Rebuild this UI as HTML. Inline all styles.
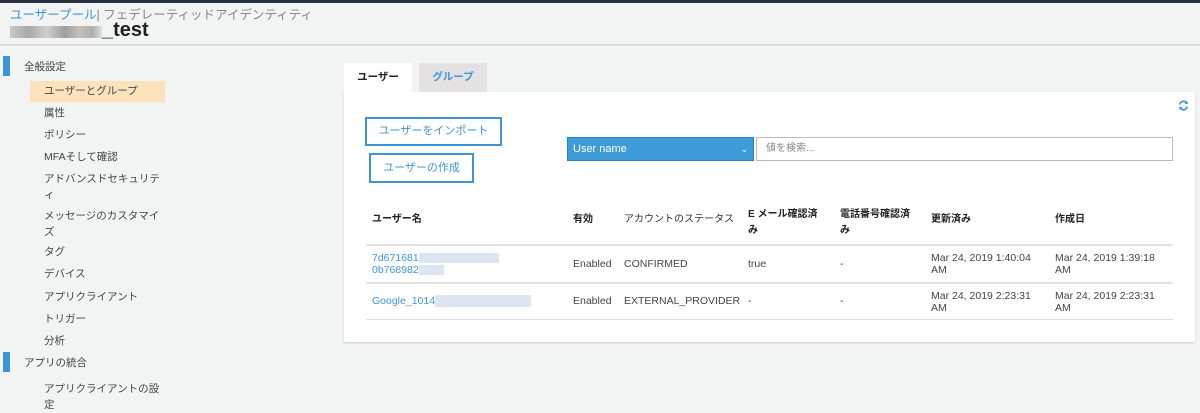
<!DOCTYPE html>
<html><head><meta charset="utf-8"><style>
*{margin:0;padding:0;box-sizing:border-box}
body{width:1200px;height:408px;overflow:hidden;background:#f2f3f3;font-family:"Liberation Sans","Noto Sans CJK JP",sans-serif;color:#333;position:relative;font-size:11px}
.a{position:absolute;white-space:nowrap}
.nav{position:absolute;left:44px;font-size:10.5px;color:#444;line-height:16px}
.th{position:absolute;font-size:10px;font-weight:bold;color:#222;line-height:16px}
.td{position:absolute;font-size:10.5px;color:#444;line-height:12px}
.line{position:absolute;left:366px;width:807px;height:1px;background:#ddd}
.btn{position:absolute;border:2px solid #3f95d3;background:#fff;color:#3f95d3;font-size:11px;text-align:center}
.blur{display:inline-block;vertical-align:middle;background:#dde6f0}
</style></head><body>
<div class="a" style="left:0;top:0;width:1200px;height:3px;background:#232f3e"></div>
<div class="a" style="left:10px;top:4px;font-size:12.5px;color:#888"><span style="color:#3f95d3">ユーザープール</span>| フェデレーティッドアイデンティティ</div>
<div class="a" style="left:10px;top:26px;width:92px;height:12px;background:linear-gradient(90deg,#c8c8c8,#a8a8a8 20%,#cfcfcf 40%,#9e9e9e 60%,#c4bfb8 75%,#b0b0b0 90%,#e0e0e0)"></div>
<div class="a" style="left:102px;top:19px;font-size:20px;font-weight:bold;color:#222">_test</div>
<div class="a" style="left:0;top:44px;width:1200px;height:2px;background:#dcdcdc"></div>

<div class="a" style="left:3px;top:56px;width:7px;height:20px;background:#3f95d3"></div>
<div class="a" style="left:24px;top:59px;font-size:10.5px;color:#444">全般設定</div>
<div class="a" style="left:30px;top:81px;width:135px;height:21px;background:#fbe2bd"></div>
<div class="nav" style="top:83px">ユーザーとグループ</div>
<div class="nav" style="top:105px">属性</div>
<div class="nav" style="top:127px">ポリシー</div>
<div class="nav" style="top:149px">MFAそして確認</div>
<div class="nav" style="top:171px">アドバンスドセキュリテ<br>ィ</div>
<div class="nav" style="top:208px">メッセージのカスタマイ<br>ズ</div>
<div class="nav" style="top:244px">タグ</div>
<div class="nav" style="top:266px">デバイス</div>
<div class="nav" style="top:289px">アプリクライアント</div>
<div class="nav" style="top:311px">トリガー</div>
<div class="nav" style="top:333px">分析</div>
<div class="a" style="left:3px;top:352px;width:7px;height:20px;background:#3f95d3"></div>
<div class="a" style="left:24px;top:355px;font-size:10.5px;color:#444">アプリの統合</div>
<div class="nav" style="top:381px">アプリクライアントの設<br>定</div>

<div class="a" style="left:344px;top:63px;width:68px;height:30px;background:#fff;font-size:10.5px;font-weight:bold;color:#222;text-align:center;line-height:29px">ユーザー</div>
<div class="a" style="left:419px;top:63px;width:68px;height:29px;background:#e3e1e1;font-size:10.5px;font-weight:bold;color:#3f95d3;text-align:center;line-height:29px">グループ</div>
<div class="a" style="left:344px;top:92px;width:851px;height:250px;background:#fff;box-shadow:0 1px 2px rgba(0,0,0,.15)"></div>
<svg class="a" style="left:1178px;top:100px" width="11" height="11" viewBox="0 0 12 12"><path d="M2 5A4 4 0 0 1 9.5 3.5M10 7A4 4 0 0 1 2.5 8.5" fill="none" stroke="#3f95d3" stroke-width="1.8"/><path d="M10.5 1v3.5H7zM1.5 11V7.5H5z" fill="#3f95d3"/></svg>

<div class="btn" style="left:365px;top:117px;width:137px;height:29px;line-height:25px">ユーザーをインポート</div>
<div class="btn" style="left:369px;top:153px;width:105px;height:30px;line-height:26px">ユーザーの作成</div>
<div class="a" style="left:567px;top:137px;width:187px;height:24px;background:#3f9bd8;border:1px solid #2f80c0;color:#fff;font-size:11px;line-height:22px;padding-left:5px">User name<span style="position:absolute;right:5px;font-size:9px">&#8964;</span></div>
<div class="a" style="left:756px;top:137px;width:417px;height:24px;background:#fff;border:1px solid #bbb;color:#888;font-size:10px;line-height:22px;padding-left:9px">値を検索...</div>

<div class="th" style="left:372px;top:212px">ユーザー名</div>
<div class="th" style="left:573px;top:212px">有効</div>
<div class="th" style="left:624px;top:212px;font-weight:normal;color:#333">アカウントのステータス</div>
<div class="th" style="left:748px;top:207px">E メール確認済<br>み</div>
<div class="th" style="left:840px;top:207px">電話番号確認済<br>み</div>
<div class="th" style="left:931px;top:212px">更新済み</div>
<div class="th" style="left:1055px;top:212px">作成日</div>
<div class="line" style="top:244px;height:2px;background:#e2e2e2"></div>

<div class="td" style="left:372px;top:252px;color:#3f95d3">7d671681<span class="blur" style="width:80px;height:10px"></span><br>0b768982<span class="blur" style="width:25px;height:10px"></span></div>
<div class="td" style="left:573px;top:258px">Enabled</div>
<div class="td" style="left:624px;top:258px">CONFIRMED</div>
<div class="td" style="left:748px;top:258px">true</div>
<div class="td" style="left:840px;top:258px">-</div>
<div class="td" style="left:931px;top:252px">Mar 24, 2019 1:40:04<br>AM</div>
<div class="td" style="left:1055px;top:252px">Mar 24, 2019 1:39:18<br>AM</div>
<div class="line" style="top:282px;height:2px;background:#e2e2e2"></div>

<div class="td" style="left:372px;top:295px;color:#3f95d3">Google_1014<span class="blur" style="width:96px;height:12px"></span></div>
<div class="td" style="left:573px;top:295px">Enabled</div>
<div class="td" style="left:624px;top:295px">EXTERNAL_PROVIDER</div>
<div class="td" style="left:748px;top:295px">-</div>
<div class="td" style="left:840px;top:295px">-</div>
<div class="td" style="left:931px;top:290px">Mar 24, 2019 2:23:31<br>AM</div>
<div class="td" style="left:1055px;top:290px">Mar 24, 2019 2:23:31<br>AM</div>
<div class="line" style="top:319px"></div>
</body></html>
